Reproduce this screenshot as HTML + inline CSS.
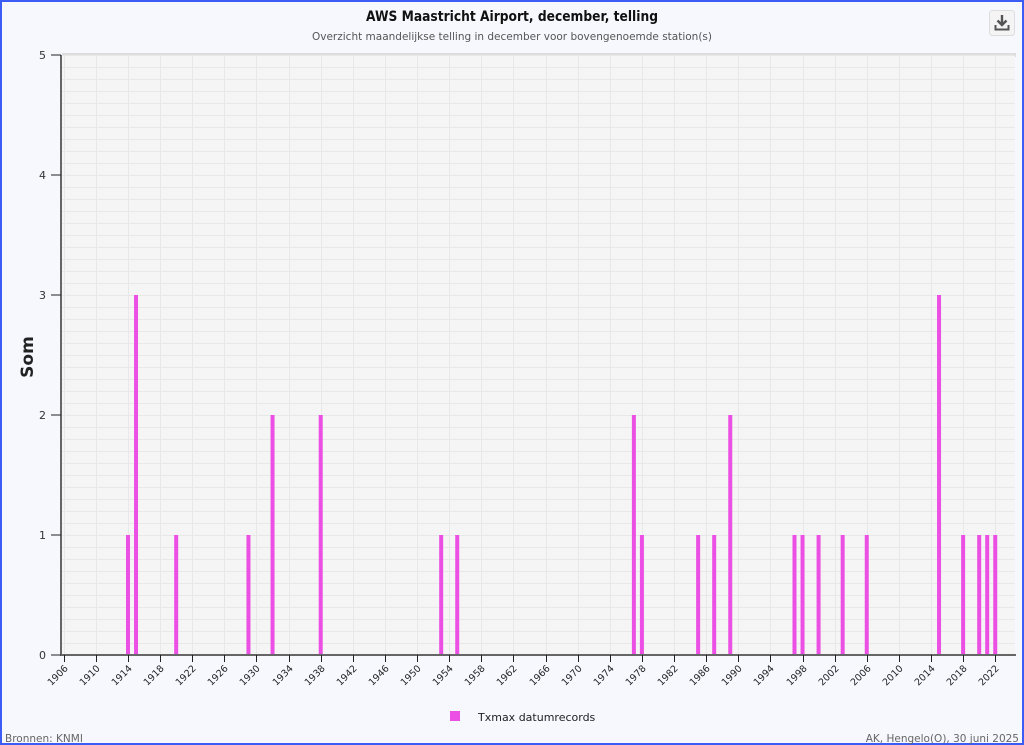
<!DOCTYPE html>
<html><head><meta charset="utf-8"><style>
html,body{margin:0;padding:0;background:#fff}
svg{display:block}
text{font-family:"DejaVu Sans","Liberation Sans",sans-serif}
</style></head><body>
<svg width="1024" height="745" viewBox="0 0 1024 745" xmlns="http://www.w3.org/2000/svg">
<rect x="1" y="1" width="1022" height="743" fill="#f7f8fe" stroke="#3c5cf6" stroke-width="2"/>
<text x="512" y="21" text-anchor="middle" font-size="14" font-weight="bold" fill="#111" textLength="292" lengthAdjust="spacingAndGlyphs">AWS Maastricht Airport, december, telling</text>
<text x="512" y="40" text-anchor="middle" font-size="10.5" fill="#555" textLength="400" lengthAdjust="spacingAndGlyphs">Overzicht maandelijkse telling in december voor bovengenoemde station(s)</text>
<rect x="989.5" y="10.5" width="25" height="25" rx="3" fill="#f4f4f4" stroke="#ddd"/>
<path d="M1002 15v10M997.5 20.5l4.5 4.5 4.5-4.5" stroke="#555" stroke-width="2.4" fill="none"/>
<path d="M995.5 25v4.5h13V25" stroke="#555" stroke-width="2" fill="none"/>
<rect x="62" y="53" width="954" height="4" fill="#ddd"/>
<rect x="62" y="55" width="953" height="600" fill="#f5f5f5"/>
<g id="grid" stroke="#e8e8e8" stroke-width="1"></g>
<g id="bars" fill="#ec4fe3"></g>
<line x1="61" y1="55" x2="61" y2="656" stroke="#666" stroke-width="2"/>
<line x1="60" y1="655" x2="1016" y2="655" stroke="#666" stroke-width="2"/>
<g font-size="11" fill="#333" text-anchor="end">
<text x="46" y="59">5</text><text x="46" y="179">4</text><text x="46" y="299">3</text><text x="46" y="419">2</text><text x="46" y="539">1</text><text x="46" y="659">0</text>
</g>
<g stroke="#222" stroke-width="1"><line x1="51" y1="55" x2="61" y2="55"/><line x1="51" y1="175" x2="61" y2="175"/><line x1="51" y1="295" x2="61" y2="295"/><line x1="51" y1="415" x2="61" y2="415"/><line x1="51" y1="535" x2="61" y2="535"/><line x1="51" y1="655" x2="61" y2="655"/></g>
<text transform="translate(33,357) rotate(-90)" text-anchor="middle" font-size="17" font-weight="bold" fill="#222">Som</text>
<g id="xt" font-size="9.5" fill="#222"></g>
<rect x="450" y="711" width="10" height="10" fill="#ec4fe3"/>
<text x="478" y="721" font-size="11" fill="#222">Txmax datumrecords</text>
<text x="5" y="742" font-size="10.5" fill="#666" font-family="Liberation Sans">Bronnen: KNMI</text>
<text x="1019" y="742" text-anchor="end" font-size="10.5" fill="#666" font-family="Liberation Sans">AK, Hengelo(O), 30 juni 2025</text>
</svg>
<script>
var ns="http://www.w3.org/2000/svg";
function el(p,t,a){var e=document.createElementNS(ns,t);for(var k in a)e.setAttribute(k,a[k]);p.appendChild(e);return e;}
var g=document.getElementById("grid"),b=document.getElementById("bars"),xt=document.getElementById("xt");
for(var y=55;y<655;y+=12)el(g,"line",{x1:62,x2:1015,y1:y+0.5,y2:y+0.5});
function X(yr){return 128+(yr-1914)*8.03;}
for(var yr=1906;yr<=2022;yr+=4){var x=Math.round(X(yr))+0.5;
el(g,"line",{x1:x,x2:x,y1:55,y2:655});
el(document.querySelector("svg"),"line",{x1:x,x2:x,y1:655,y2:662,stroke:"#222"});
var t=el(xt,"text",{x:0,y:0,"text-anchor":"end",transform:"translate("+(x+4)+",669) rotate(-45)"});t.textContent=yr;}
var d=[[1914,1],[1915,3],[1920,1],[1929,1],[1932,2],[1938,2],[1953,1],[1955,1],[1977,2],[1978,1],[1985,1],[1987,1],[1989,2],[1997,1],[1998,1],[2000,1],[2003,1],[2006,1],[2015,3],[2018,1],[2020,1],[2021,1],[2022,1]];
d.forEach(function(v){el(b,"rect",{x:X(v[0])-2,y:655-v[1]*120,width:4,height:v[1]*120});});
</script>
</body></html>
